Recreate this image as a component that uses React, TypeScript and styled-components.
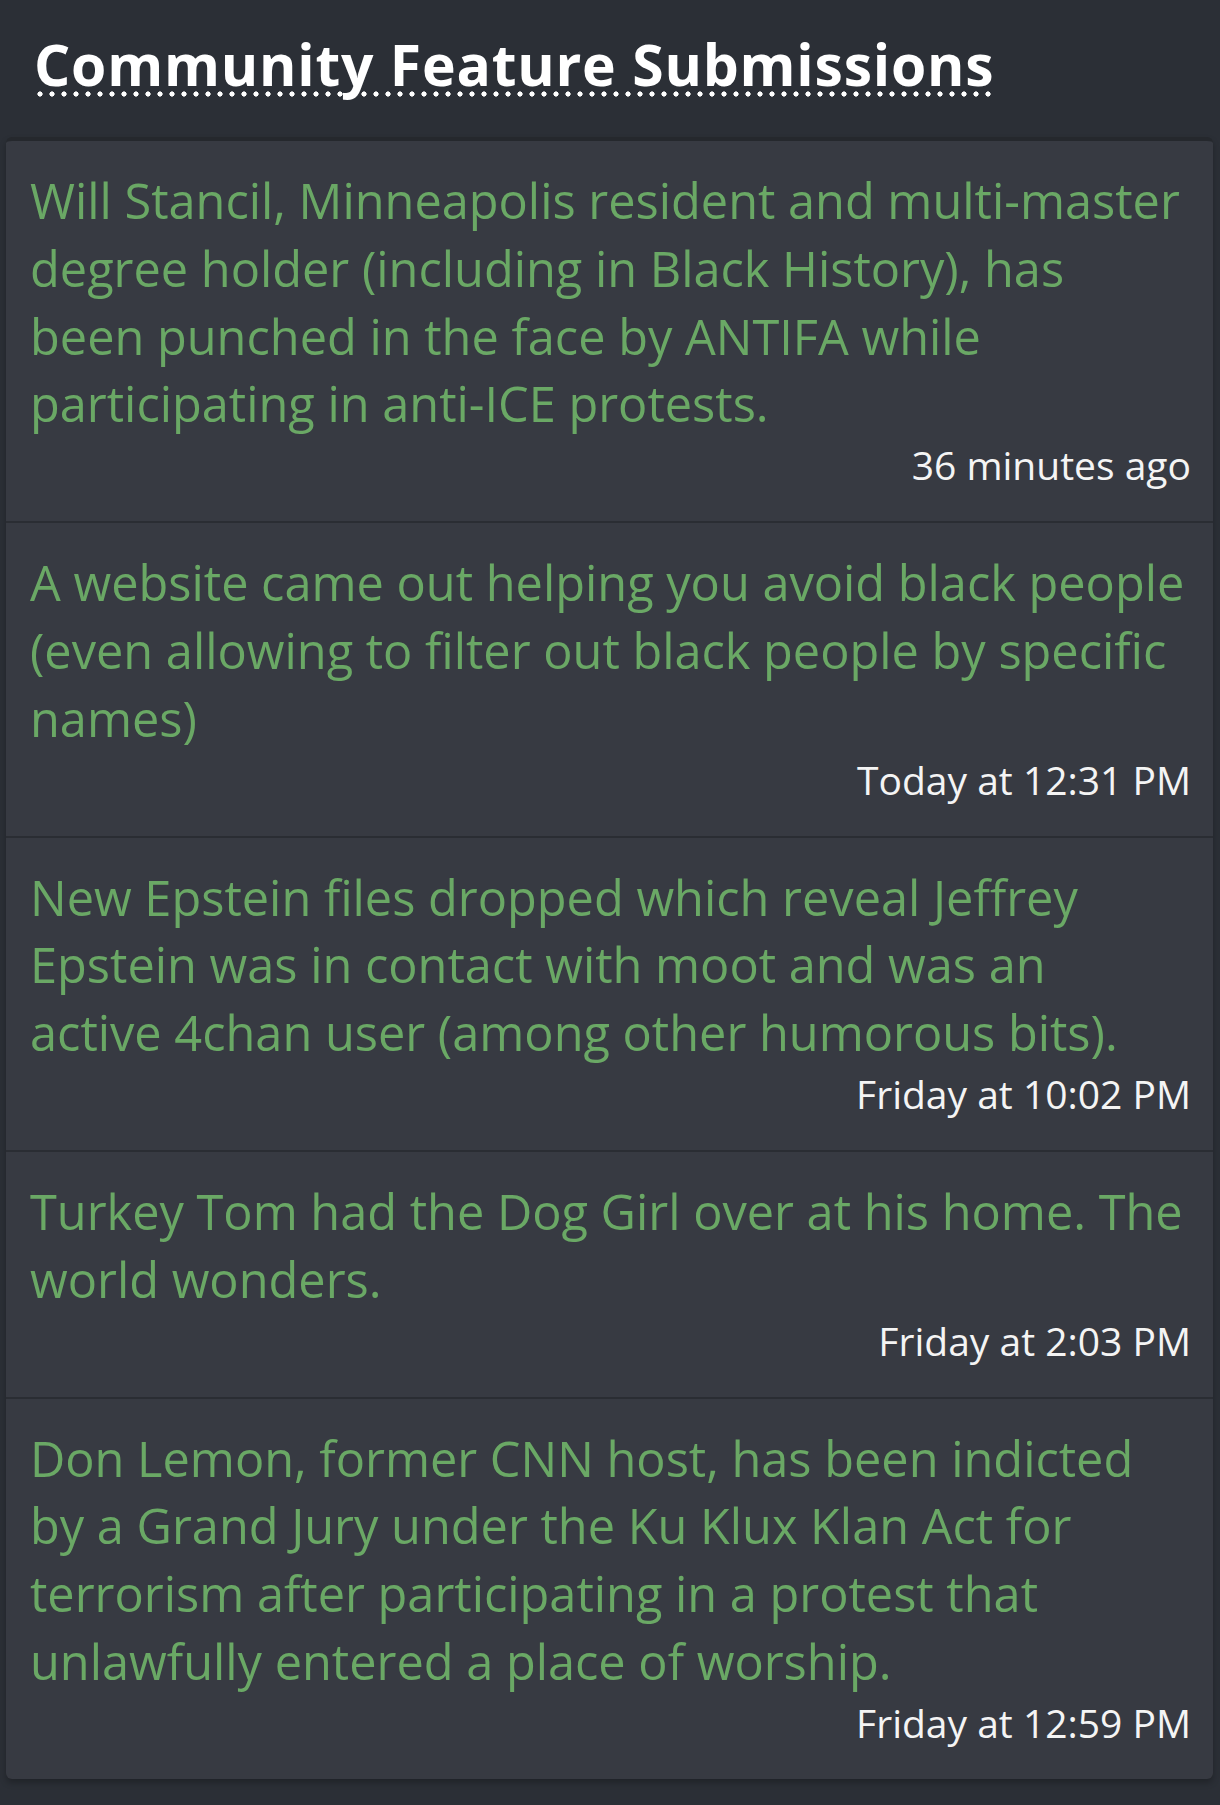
import React from "react";
import styled, { createGlobalStyle } from "styled-components";

const Global = createGlobalStyle`
  html, body { margin: 0; padding: 0; background: #2b2f36; }
  body { font-family: "Open Sans", "Noto Sans", sans-serif; }
`;

const Page = styled.div`
  width: 1220px;
  min-height: 1805px;
  background: #2b2f36;
  display: flex;
  flex-direction: column;
`;

const Header = styled.header`
  padding: 25px 34px 34px;
`;

const Title = styled.h1`
  margin: 0;
  font-size: 57px;
  font-weight: 700;
  line-height: normal;
  color: #ffffff;
  letter-spacing: 0.8px;
`;

const Dotted = styled.span`
  background-image: radial-gradient(circle, #ffffff 2.3px, transparent 2.9px);
  background-size: 12px 6px;
  background-repeat: repeat-x;
  background-position: 0 66px;
  padding-bottom: 2px;
`;

const Card = styled.section`
  margin: 0 7px 0 6px;
  background: #373a42;
  border-top: 4px solid #25282d;
  border-radius: 6px;
  box-shadow: 0 4px 6px rgba(0, 0, 0, 0.25);
  display: flex;
  flex-direction: column;
`;

const Item = styled.article<{ $last?: boolean }>`
  padding: 26px 22px 30px 24px;
  border-bottom: ${(p) => (p.$last ? "none" : "2px solid #2a2d33")};
  display: flex;
  flex-direction: column;
`;

const Headline = styled.div`
  padding-right: 4px;
  font-size: 48.7px;
  line-height: 67.8px;
  color: #6aa865;
`;

const Stamp = styled.div`
  font-size: 39px;
  line-height: 53px;
  color: #f4f4f4;
  text-align: right;
`;

const items = [
  {
    text: "Will Stancil, Minneapolis resident and multi-master degree holder (including in Black History), has been punched in the face by ANTIFA while participating in anti-ICE protests.",
    time: "36 minutes ago",
  },
  {
    text: "A website came out helping you avoid black people (even allowing to filter out black people by specific names)",
    time: "Today at 12:31 PM",
  },
  {
    text: "New Epstein files dropped which reveal Jeffrey Epstein was in contact with moot and was an active 4chan user (among other humorous bits).",
    time: "Friday at 10:02 PM",
  },
  {
    text: "Turkey Tom had the Dog Girl over at his home. The world wonders.",
    time: "Friday at 2:03 PM",
  },
  {
    text: "Don Lemon, former CNN host, has been indicted by a Grand Jury under the Ku Klux Klan Act for terrorism after participating in a protest that unlawfully entered a place of worship.",
    time: "Friday at 12:59 PM",
  },
];

export default function App() {
  return (
    <Page>
      <Global />
      <Header>
        <Title>
          <Dotted>Community Feature Submissions</Dotted>
        </Title>
      </Header>
      <Card>
        {items.map((it, i) => (
          <Item key={i} $last={i === items.length - 1}>
            <Headline>{it.text}</Headline>
            <Stamp>{it.time}</Stamp>
          </Item>
        ))}
      </Card>
    </Page>
  );
}
